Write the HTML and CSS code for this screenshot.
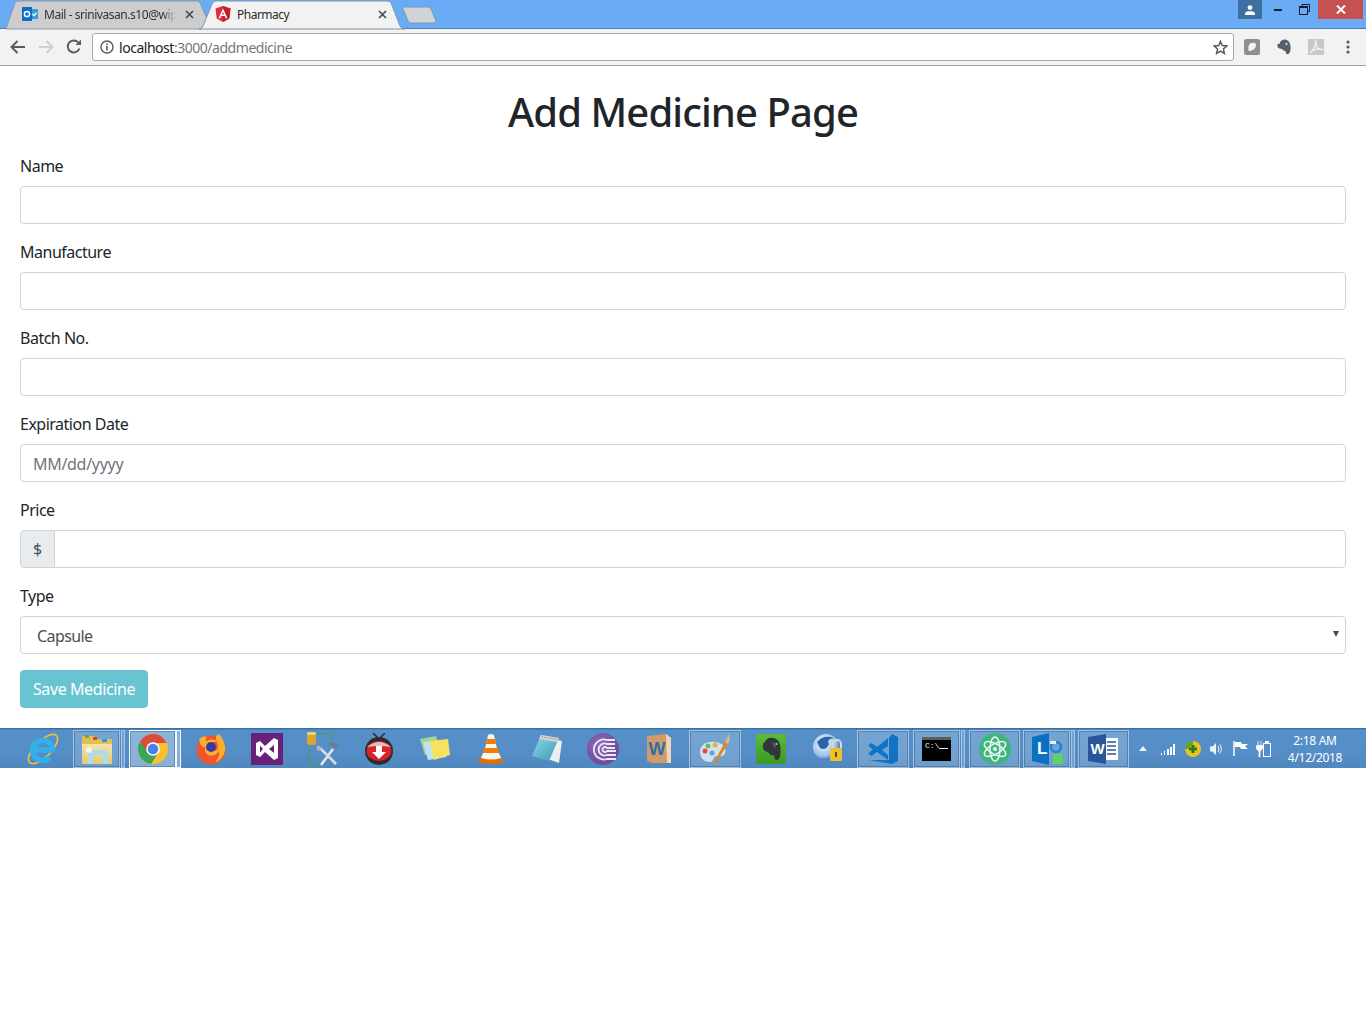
FILE: index.html
```html
<!DOCTYPE html>
<html lang="en">
<head>
<meta charset="utf-8">
<title>Pharmacy</title>
<link rel="stylesheet" href="styles.css">
</head>
<body>
<svg class="defs" width="0" height="0">
  <defs>
    <linearGradient id="gFolder" x1="0" y1="0" x2="0" y2="1"><stop offset="0" stop-color="#f9eab5"/><stop offset="1" stop-color="#e8c873"/></linearGradient>
    <linearGradient id="gNote" x1="0" y1="0" x2="1" y2="1"><stop offset="0" stop-color="#8fdcec"/><stop offset="1" stop-color="#3f97b0"/></linearGradient>
    <radialGradient id="gGlobe" cx=".4" cy=".35" r=".7"><stop offset="0" stop-color="#f2f7fc"/><stop offset=".7" stop-color="#9fc1e6"/><stop offset="1" stop-color="#2f66ab"/></radialGradient>
    <linearGradient id="gEver" x1="0" y1="0" x2="0" y2="1"><stop offset="0" stop-color="#5cbb36"/><stop offset="1" stop-color="#399a24"/></linearGradient>
    <radialGradient id="gBt" cx=".4" cy=".35" r=".8"><stop offset="0" stop-color="#8d6bb8"/><stop offset="1" stop-color="#644390"/></radialGradient>
  </defs>
</svg>
<header class="chrome">
  <div class="tabstrip">
    <svg class="tabshapes" width="460" height="30" viewBox="0 0 460 30">
      <path d="M6 29 L15 3 Q16 1 19 1 L197 1 Q199 1 200 3 L208 21 L202 29Z" fill="#cdcdcd" stroke="#8c9aa8"/>
      <path d="M199 29 Q202 29 203 26 L212 4 Q213 1 216 1 L387 1 Q390 1 391 3 L400 26 Q401 29 405 29 Z" fill="#f2f2f2" stroke="#7f97ad"/>
      <path d="M404 7 L428 7 Q430 7 431 9 L436 21 Q436 23 434 23 L411 23 Q409 23 408 21 L403 9 Q402 7 404 7Z" fill="#cfd3d8" stroke="#7f97ad"/>
    </svg>
    <div class="tab tab-mail">
      <svg width="16" height="16" viewBox="0 0 16 16"><rect x="5" y="3" width="11" height="10" fill="#2f9fe0"/><rect x="0" y="1" width="10" height="14" fill="#0a6fc2"/><circle cx="5" cy="8" r="2.6" fill="none" stroke="#fff" stroke-width="1.5"/><path d="M10.5 8l1.6 1.6 2.6-3" fill="none" stroke="#fff" stroke-width="1.3"/></svg>
      <span class="tab-title">Mail - srinivasan.s10@wip</span>
      <svg class="tab-x" width="9" height="9" viewBox="0 0 9 9"><path d="M1 1l7 7M8 1L1 8" stroke="#4b4b4b" stroke-width="1.7"/></svg>
    </div>
    <div class="tab tab-pharmacy">
      <svg width="16" height="16" viewBox="0 0 16 16"><path d="M8 0L15.5 2.6 14.3 12.4 8 16 1.7 12.4.5 2.6Z" fill="#dd2e3c"/><path d="M8 0L15.5 2.6 14.3 12.4 8 16Z" fill="#c3202f"/><path d="M8 2.6L3.6 12.2H5.3L6.2 10H9.8L10.7 12.2H12.4ZM6.9 8.6L8 5.9 9.1 8.6Z" fill="#fff"/></svg>
      <span class="tab-title">Pharmacy</span>
      <svg class="tab-x" width="9" height="9" viewBox="0 0 9 9"><path d="M1 1l7 7M8 1L1 8" stroke="#4b4b4b" stroke-width="1.7"/></svg>
    </div>
    <div class="winctl">
      <div class="win-user"><svg width="12" height="10" viewBox="0 0 12 10"><circle cx="6" cy="2.6" r="2.4" fill="#fff"/><path d="M1 10V8.4Q1 6.6 4 6.2H8Q11 6.6 11 8.4V10Z" fill="#fff"/></svg></div>
      <div class="win-btn"><svg width="9" height="3" viewBox="0 0 9 3"><rect width="8" height="2" y="1" fill="#17202a"/></svg></div>
      <div class="win-btn"><svg width="11" height="11" viewBox="0 0 11 11"><path d="M3 2.5V.5H10.5V7.5H8.5" fill="none" stroke="#17202a"/><rect x=".5" y="2.5" width="8" height="8" fill="none" stroke="#17202a" stroke-width="1"/><rect x="1" y="3" width="7" height="1" fill="#17202a"/></svg></div>
      <div class="win-close"><svg width="10" height="9" viewBox="0 0 10 9"><path d="M1 .5l8 8M9 .5l-8 8" stroke="#fff" stroke-width="2"/></svg></div>
    </div>
  </div>
  <div class="toolbar">
    <svg class="nav" width="16" height="14" viewBox="0 0 16 14"><path d="M15 7H2M7.5 1L1.5 7l6 6" fill="none" stroke="#5a5a5a" stroke-width="2"/></svg>
    <svg class="nav" width="16" height="14" viewBox="0 0 16 14"><path d="M1 7H14M8.500 1l6 6-6 6" fill="none" stroke="#cfcfcf" stroke-width="2"/></svg>
    <svg class="nav" width="16" height="16" viewBox="0 0 16 16"><path d="M13.400 9.500A6 6 0 1 1 12.200 3.400" fill="none" stroke="#5a5a5a" stroke-width="2"/><path d="M9.500 6H15V.5Z" fill="#5a5a5a"/></svg>
    <div class="omnibox">
      <svg width="14" height="14" viewBox="0 0 14 14"><circle cx="7" cy="7" r="6" fill="none" stroke="#5a5a5a" stroke-width="1.400"/><rect x="6.200" y="6" width="1.600" height="4.500" fill="#5a5a5a"/><rect x="6.200" y="3.400" width="1.600" height="1.600" fill="#5a5a5a"/></svg>
      <span class="url"><span class="url-host">localhost</span>:3000/addmedicine</span>
      <svg class="star" width="15" height="15" viewBox="0 0 15 15"><path d="M7.500 1.500L9.300 5.600 13.800 6 10.400 9 11.400 13.400 7.500 11.100 3.600 13.400 4.600 9 1.200 6 5.700 5.600Z" fill="none" stroke="#5a5a5a" stroke-width="1.500"/></svg>
    </div>
    <div class="ext">
      <svg width="16" height="16" viewBox="0 0 16 16"><rect width="16" height="16" rx="2.500" fill="#8f8f8f"/><path d="M4.500 12Q3.500 8 5.500 5 8 3 11 4 13 6 11 9 9 12 4.500 12Z" fill="#f4f4f4"/></svg>
      <svg width="14" height="16" viewBox="0 0 14 16"><path d="M3 3Q5 0 8 .5 12 1 13 5 14.500 10 12.500 14 11 16 9 14.500L8.500 12Q6 12 5 10 2 10 .5 8V5L3 4.500Z" fill="#56606a"/><circle cx="9.500" cy="5" r="1" fill="#f2f2f2"/></svg>
      <svg width="16" height="16" viewBox="0 0 16 16"><rect width="16" height="16" fill="#c8c8c8"/><path d="M2 14Q6 11 8 4 8 1 7.500 2 7 5 10 9 12 11 15 10.500 10 9.500 6 11 3 12.500 2 14Z" fill="none" stroke="#f2f2f2" stroke-width="1.300"/></svg>
      <svg class="dots" width="4" height="14" viewBox="0 0 4 14"><circle cx="2" cy="2" r="1.600" fill="#5a5a5a"/><circle cx="2" cy="7" r="1.600" fill="#5a5a5a"/><circle cx="2" cy="12" r="1.600" fill="#5a5a5a"/></svg>
    </div>
  </div>
</header>

<main class="page">
  <h1 class="title">Add Medicine Page</h1>
  <form class="form">
    <div class="group"><label class="label" for="name">Name</label><input class="control" id="name" type="text"></div>
    <div class="group"><label class="label" for="man">Manufacture</label><input class="control" id="man" type="text"></div>
    <div class="group"><label class="label" for="batch">Batch No.</label><input class="control" id="batch" type="text"></div>
    <div class="group"><label class="label" for="exp">Expiration Date</label><input class="control" id="exp" type="text" placeholder="MM/dd/yyyy"></div>
    <div class="group"><label class="label" for="price">Price</label>
      <div class="input-group"><span class="addon">$</span><input class="control control-joined" id="price" type="text"></div>
    </div>
    <div class="group"><label class="label" for="type">Type</label>
      <div class="select-wrap"><select class="control select" id="type"><option>Capsule</option><option>Tablet</option><option>Syrup</option></select></div>
    </div>
    <button class="btn" type="button" disabled>Save Medicine</button>
  </form>
</main>

<footer class="taskbar">
  <div class="cell first"><svg width="34" height="34" viewBox="0 0 34 34"><ellipse cx="17" cy="17" rx="19" ry="8" transform="rotate(-45 17 17)" fill="none" stroke="#efbe3c" stroke-width="1.800"/><path d="M7 18H26.500A10 10 0 1 0 23.500 25.500" fill="none" stroke="#33b0ea" stroke-width="5.500"/></svg></div>
  <div class="btn-run b-explorer"><svg width="32" height="32" viewBox="0 0 32 32"><path d="M1 6H31V31H1Z" fill="url(#gFolder)"/><path d="M1 3H13L15 6H31V11H1Z" fill="#e5bd57"/><rect x="4" y="2" width="4" height="3" fill="#43b649"/><rect x="12" y="4" width="4" height="3" fill="#d9452b"/><rect x="21" y="6" width="5" height="3" fill="#2a9ad8"/><path d="M7 31V20Q7 17 11 17H23Q27 17 27 20V31H22V22H12V31Z" fill="#a9def0"/><circle cx="8" cy="17" r="3" fill="#fff" opacity=".7"/></svg></div>
  <div class="sliver s1"></div>
  <div class="btn-run active"><svg width="30" height="30" viewBox="0 0 30 30"><circle cx="15" cy="15" r="15" fill="#fbc02d"/><path d="M15 0A15 15 0 0 0 2 7.500L8.500 18.500 15 9H28.500A15 15 0 0 0 15 0Z" fill="#dd4b3e"/><path d="M2 7.500A15 15 0 0 0 13 29.900L19.500 20H11Z" fill="#3aa757"/><circle cx="15" cy="15" r="6.800" fill="#fff"/><circle cx="15" cy="15" r="5.300" fill="#4a80ea"/></svg></div>
  <div class="sliver s2 s-active"></div>
  <div class="cell"><svg width="32" height="32" viewBox="0 0 32 32"><circle cx="16" cy="17" r="14.500" fill="#f0552f"/><path d="M4 7Q7 2 12 4 10 6 11 8 17 5 23 8 15 9 13 13 13 18 20 18 25 16 22 9 19 2 24 1 31 9 30 18 28 26 20 30 25 23 24 18 20 24 13 22 9 19 10 14 6 15 4 7Z" fill="#fbb02c"/><circle cx="16" cy="14" r="5" fill="#3a3a9e"/></svg></div>
  <div class="cell"><svg width="32" height="32" viewBox="0 0 32 32"><rect width="32" height="32" fill="#68217a"/><path d="M5 10L9 8 14 13 23 5 27 7V25L23 27 14 19 9 24 5 22ZM9 12.500V19.500L12 16ZM18 16L23 20V12Z" fill="#fff" fill-rule="evenodd"/></svg></div>
  <div class="cell"><svg width="34" height="36" viewBox="0 0 34 36"><rect x="1" y="1" width="9" height="13" rx="2" fill="#d9a52f"/><rect x="1" y="1" width="9" height="3" rx="1.500" fill="#f2d37a"/><path d="M13 3H25V16M3 19V33H14" fill="none" stroke="#46a044" stroke-width="2" stroke-dasharray="2 2"/><path d="M15 34L27 18" stroke="#e4e9ee" stroke-width="2.500"/><path d="M14 17L30 33" stroke="#d8dde2" stroke-width="2.500"/><path d="M22 13L31 18 33 15 27 11Z" fill="#6d7a87"/><path d="M12 14A4 4 0 0 0 12 20L16 18Z" fill="#aeb8c1"/></svg></div>
  <div class="cell"><svg width="30" height="32" viewBox="0 0 30 32"><path d="M9 0L15 6 21 0" fill="none" stroke="#2c2c2c" stroke-width="1.500"/><circle cx="15" cy="18" r="14" fill="#2c2c2c"/><ellipse cx="15" cy="18" rx="12.500" ry="10" fill="#d8222c"/><path d="M3 14Q15 4 27 14 15 12 3 14Z" fill="#eeb9bd"/><path d="M12 13H18V19H22L15 26 8 19H12Z" fill="#fff"/></svg></div>
  <div class="cell"><svg width="34" height="28" viewBox="0 0 34 28"><path d="M2 4L18 1 23 17 7 20Z" fill="#9ed98a"/><path d="M5 7L25 5 28 22 10 25Z" fill="#bfe3f4"/><path d="M12 6L30 4 32 20 16 25Z" fill="#f7e15f"/></svg></div>
  <div class="cell"><svg width="28" height="32" viewBox="0 0 28 32"><path d="M11 2Q14 0 17 2L20 16H8Z" fill="#f5f5f5"/><path d="M10 6H18L19 11H9ZM7 15H21L22 20H6Z" fill="#f57c00"/><path d="M4 24Q14 28 24 24L27 29Q14 33 1 29Z" fill="#e86c00"/><path d="M6 20H22L24 25Q14 28 4 25Z" fill="#f5f5f5"/></svg></div>
  <div class="cell"><svg width="32" height="30" viewBox="0 0 32 30"><path d="M12 3L31 7 28 29 14 24Z" fill="#eeeeee"/><path d="M10 1L28 4 18 27 1 22Z" fill="url(#gNote)"/><path d="M10 1L28 4 26 8 8 5Z" fill="#d4d4d4"/><path d="M11 3L26 5.500" stroke="#8a8a8a" stroke-width="1" stroke-dasharray="1 1"/></svg></div>
  <div class="cell"><svg width="32" height="32" viewBox="0 0 32 32"><circle cx="16" cy="16" r="16" fill="url(#gBt)"/><path d="M28 7H20A10 10 0 1 0 20 26H29M28 11H20A6 6 0 1 0 20 22H29M28 15H20A2.500 2.500 0 1 0 20 18H29" fill="none" stroke="#eee8f3" stroke-width="1.800"/></svg></div>
  <div class="cell"><svg width="26" height="30" viewBox="0 0 26 30"><path d="M1 2L20 0 25 4V29L6 29 1 27Z" fill="#d39a6a"/><path d="M20 0L25 4V29L21 29Z" fill="#edd8bc"/><text x="2.500" y="21" class="word-w">W</text></svg></div>
  <div class="btn-run b-paint"><svg width="32" height="32" viewBox="0 0 32 32"><path d="M1 19C1 11 9 8 16 9 24 10 28 15 26 20 25 24 20 23 17 23 14 24 15 29 11 29 5 29 1 25 1 19Z" fill="#cfe2f0"/><circle cx="6" cy="18" r="2.500" fill="#de4d4d"/><circle cx="9" cy="13" r="2.500" fill="#69bb56"/><circle cx="16" cy="12" r="2.500" fill="#e3b23a"/><circle cx="13" cy="20" r="2.500" fill="#6d9bd6"/><path d="M14 31L26 9 29 11 16 31Z" fill="#e58522"/><path d="M26 9L30 1 31 7 29 11Z" fill="#d9b78c"/></svg></div>
  <div class="cell"><svg width="30" height="30" viewBox="0 0 30 30"><rect width="30" height="30" rx="2" fill="url(#gEver)"/><path d="M8 9L11 5Q15 3 19 4.500 23 6 24 11 25.500 18 23.500 24 21.500 27.500 18.500 25L18 21.500Q14 22 12.500 18.500 9 18 7 15V9.500Z" fill="#30383a"/><path d="M16 8Q20 9 19.500 14 17 12 16 8Z" fill="#5c6669"/><circle cx="20.500" cy="10" r="1" fill="#b8d8a8"/></svg></div>
  <div class="cell"><svg width="30" height="32" viewBox="0 0 30 32"><circle cx="14" cy="14" r="13" fill="url(#gGlobe)"/><path d="M5 9Q12 1 22 5 14 6 17 11 14 18 8 15Z" fill="#2b62a9"/><path d="M21 15V11A4 4 0 0 1 29 11V15" fill="none" stroke="#d8d8d8" stroke-width="2"/><rect x="18" y="15" width="12" height="13" rx="1.500" fill="#eec12a"/><rect x="23" y="19" width="2" height="5" fill="#604a10"/></svg></div>
  <div class="btn-run b-code"><svg width="32" height="32" viewBox="0 0 32 32"><path d="M1 12.500L4.500 10 10 14 21 5V13L15 17 21 22V27L10 19 4.500 23 1 20.500 6 16.500Z" fill="#1272c5"/><path d="M22 5L25 1 31 4V28L25 31 2 27H22Z" fill="#1272c5"/></svg></div>
  <div class="btn-run b-cmd"><svg width="29" height="24" viewBox="0 0 29 24"><rect width="29" height="24" fill="#000"/><rect width="29" height="3" fill="#5d5d5d"/><text x="3" y="11" class="cmd-t">C:\_</text><rect x="17" y="11" width="9" height="1" fill="#f0f0f0"/></svg></div>
  <div class="sliver s3"></div>
  <div class="btn-run b-atom"><svg width="32" height="32" viewBox="0 0 32 32"><circle cx="16" cy="16" r="16" fill="#3db67c"/><g fill="none" stroke="#e9f7ef" stroke-width="1.500"><ellipse cx="16" cy="16" rx="12" ry="5" transform="rotate(30 16 16)"/><ellipse cx="16" cy="16" rx="12" ry="5" transform="rotate(-30 16 16)"/><ellipse cx="16" cy="16" rx="5" ry="12"/></g><circle cx="16" cy="16" r="2" fill="#e9f7ef"/></svg></div>
  <div class="btn-run b-lync"><svg width="32" height="32" viewBox="0 0 32 32"><path d="M0 4L17 0V32L0 28Z" fill="#0b6fc4"/><text x="5" y="21" class="lync-l">L</text><circle cx="24" cy="14" r="5" fill="none" stroke="#1a86d6" stroke-width="2.500"/><path d="M18 8H24V11H18Z" fill="#e6f1fa"/><rect x="21" y="21" width="10" height="10" fill="#5bd55f"/></svg></div>
  <div class="sliver s4"></div>
  <div class="btn-run b-word"><svg width="30" height="30" viewBox="0 0 30 30"><rect x="14" y="4" width="16" height="22" fill="#fff"/><path d="M19 8H28M19 12H28M19 16H28M19 20H28" stroke="#2a5699" stroke-width="1.500"/><path d="M0 3L18 0V30L0 27Z" fill="#2a5699"/><text x="2.500" y="20" class="word-b">W</text></svg></div>
  <div class="tray">
    <svg class="t-up" width="8" height="5" viewBox="0 0 8 5"><path d="M0 5L4 0 8 5Z" fill="#eef3f8"/></svg>
    <svg class="t-sig" width="16" height="12" viewBox="0 0 16 12"><path d="M1 10h1v2H1zM4 8h1v4H4zM7 6h2v6H7zM10 4h2v8h-2zM13 1h2v11h-2z" fill="#fff"/></svg>
    <svg class="t-gr" width="16" height="16" viewBox="0 0 16 16"><circle cx="8" cy="8" r="8" fill="#ecc21f"/><path d="M0 8A8 8 0 0 1 8 0V3L3 8Z" fill="#5da52a"/><path d="M6.500 4H9.500V6.500H12V9.500H9.500V12H6.500V9.500H4V6.500H6.500Z" fill="#2a7a22"/></svg>
    <svg class="t-vol" width="15" height="14" viewBox="0 0 15 14"><path d="M1 4.500H3.500L7 1V13L3.500 9.500H1Z" fill="#eef3f8"/><path d="M9 4Q11 7 9 10M11 2.500Q14 7 11 11.500" fill="none" stroke="#eef3f8"/></svg>
    <svg class="t-flag" width="15" height="15" viewBox="0 0 15 15"><path d="M1 0V15" stroke="#fff" stroke-width="1.500"/><path d="M2 1H8L9 3H15L12 5.500 15 8H8L7 6H2Z" fill="#fff"/></svg>
    <svg class="t-bat" width="15" height="16" viewBox="0 0 15 16"><rect x="7.500" y="2.500" width="7" height="13" fill="none" stroke="#fff"/><rect x="9" y="0" width="4" height="2" fill="#fff"/><path d="M2 0V4M5 0V4M.500 4.500H6.500V8L4 10V16H3V10L.500 8Z" stroke="#fff" fill="#fff" stroke-width=".8"/></svg>
    <div class="clock"><span>2:18 AM</span><span>4/12/2018</span></div>
  </div>
</footer>
</body>
</html>
```
FILE: styles.css
```css
* { box-sizing: border-box; }
html, body { margin: 0; padding: 0; background: #fff; }
body { font-family: "Noto Sans", "Open Sans", sans-serif; color: #212529; width: 1366px; height: 1023px; overflow: hidden; }
.defs { display: block; height: 0; }

.chrome { height: 66px; display: flex; flex-direction: column; }
.tabstrip { position: relative; height: 29px; background: #69acf5; border-bottom: 1px solid #4d7fb0; display: flex; font-size: 12px; color: #2b2b2b; }
.tabshapes { position: absolute; left: 0; top: 0; }
.tab { position: relative; height: 28px; display: flex; align-items: center; }
.tab svg { flex: none; }
.tab-mail { margin-left: 22px; width: 172px; gap: 6px; }
.tab-mail .tab-title { width: 132px; flex: none; white-space: nowrap; letter-spacing: -.45px; color: #333; -webkit-mask-image: linear-gradient(90deg, #000 90%, transparent 100%); mask-image: linear-gradient(90deg, #000 90%, transparent 100%); }
.tab-pharmacy { margin-left: 21px; width: 172px; gap: 6px; }
.tab-pharmacy .tab-title { width: 132px; flex: none; letter-spacing: -.5px; }
.tab-x { margin-left: 3px; }
.winctl { margin-left: auto; margin-right: 3px; display: flex; height: 19px; align-items: flex-start; }
.win-user { width: 24px; height: 19px; background: #3e6f9f; display: flex; align-items: center; justify-content: center; margin-right: 3px; }
.win-btn { width: 26px; height: 19px; display: flex; align-items: center; justify-content: center; }
.win-btn + .win-btn { margin-right: 1px; }
.win-close { width: 45px; height: 19px; background: #c75050; display: flex; align-items: center; justify-content: center; }

.toolbar { height: 37px; background: #f2f2f2; border-bottom: 1px solid #a0a0a0; display: flex; align-items: center; padding: 0 0 0 10px; }
.nav { margin-right: 12px; flex: none; }
.omnibox { width: 1142px; height: 28px; margin-left: -2px; background: #fff; border: 1px solid #a9a9a9; border-radius: 3px; display: flex; align-items: center; padding: 0 5px 0 7px; font-size: 14px; color: #777; }
.url { margin-left: 5px; flex: 1; letter-spacing: -.47px; }
.url-host { color: #222; }
.ext { display: flex; align-items: center; margin-left: 10px; gap: 16px; }
.ext svg:nth-child(2) { margin: 0 1px; }
.dots { margin-left: 6px; }

.page { height: 662px; padding: 22px 20px 0; }
.title { margin: 0 0 18px; height: 48px; font-size: 40px; line-height: 48px; font-weight: 500; text-align: center; letter-spacing: -.9px; color: #212529; }
.form { display: flex; flex-direction: column; }
.group { height: 86px; }
.label { display: block; height: 24px; margin-bottom: 8px; font-size: 16px; line-height: 24px; letter-spacing: -.5px; color: #212529; }
.control { display: block; width: 100%; height: 38px; padding: 7px 12px 5px; border: 1px solid #ced4da; border-radius: 4px; font: 16px/24px "Noto Sans", "Open Sans", sans-serif; letter-spacing: -.3px; color: #495057; background: #fff; outline: none; }
.control::placeholder { color: #6c757d; opacity: 1; }
.input-group { display: flex; }
.addon { width: 35px; height: 38px; flex: none; display: flex; align-items: center; justify-content: center; font-size: 16px; color: #495057; background: #e9ecef; border: 1px solid #ced4da; border-radius: 4px 0 0 4px; }
.control-joined { margin-left: -1px; flex: 1; width: auto; border-radius: 0 4px 4px 0; }
.select-wrap { position: relative; }
.select-wrap::after { content: ""; position: absolute; right: 7px; top: 15px; border-left: 3px solid transparent; border-right: 3px solid transparent; border-top: 6px solid #444c55; pointer-events: none; }
.select { appearance: none; padding: 2px 16px 0; letter-spacing: -.6px; }
.btn { width: 128px; height: 38px; padding: 0; border: 1px solid #68c4d1; border-radius: 4px; background: #68c4d1; color: #fff; font: 16px/24px "Noto Sans", "Open Sans", sans-serif; letter-spacing: -.4px; opacity: 1; }

.taskbar { height: 40px; display: flex; align-items: center; padding-left: 15px; background: linear-gradient(180deg, #3e78b2 0, #5690c9 3%, #558ec7 60%, #4f87bf 100%); border-top: 1px solid #3c6fa2; }
.cell { width: 56px; height: 38px; flex: none; display: flex; align-items: center; justify-content: center; }
.btn-run { height: 38px; flex: none; display: flex; align-items: center; justify-content: center; background: rgba(255,255,255,.18); border: 1px solid rgba(255,255,255,.34); outline: 1px solid rgba(30,70,110,.35); outline-offset: -2px; }
.active { width: 47px; margin-left: 4px; background: rgba(255,255,255,.32); border: 1px solid #f4f8fc; }
.b-explorer { width: 47px; margin-left: 2px; }
.b-paint { width: 52px; margin: 0 2px; }
.b-code { width: 52px; margin: 0 2px; }
.b-cmd { width: 47px; margin-left: 2px; padding-right: 1px; }
.b-atom { width: 51px; margin-left: 4px; }
.b-lync { width: 47px; margin-left: 3px; padding-left: 3px; }
.b-word { width: 51px; margin-left: 3px; padding-right: 1px; }
.sliver { width: 4px; height: 38px; flex: none; background: rgba(255,255,255,.18); border: 1px solid rgba(255,255,255,.34); }
.s1 { margin-left: 1px; }
.s2 { width: 5px; margin-right: 2px; }
.s-active { background: rgba(255,255,255,.3); border-color: #f4f8fc; }
.s3 { margin-left: 1px; }
.s4 { margin-left: 1px; }
.tray { flex: 1; height: 38px; display: flex; align-items: center; color: #fff; padding-left: 10px; }
.t-up { margin-right: 13px; }
.t-sig { margin-right: 9px; }
.t-gr { margin-right: 8px; }
.t-vol { margin-right: 9px; }
.t-flag { margin-right: 8px; }
.clock { margin-left: 8px; width: 72px; display: flex; flex-direction: column; align-items: center; font-size: 12px; line-height: 17px; letter-spacing: -.3px; color: #fff; }

.word-w { font: 700 18px "Liberation Sans", sans-serif; fill: #2a6fa8; }
.word-b { font: 700 15px "Liberation Sans", sans-serif; fill: #fff; }
.lync-l { font: 700 17px "Liberation Sans", sans-serif; fill: #fff; }
.cmd-t { font: 8px "Liberation Mono", monospace; fill: #f0f0f0; }
```
